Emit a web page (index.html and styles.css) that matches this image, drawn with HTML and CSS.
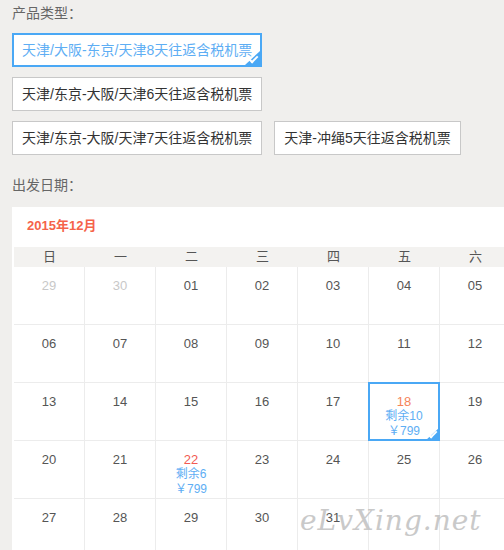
FILE: index.html
```html
<!doctype html>
<html>
    <head>
        <meta http-equiv="Content-Type" content="text/html; charset=utf-8">
        <link rel="stylesheet" href="styles.css">
    </head>
    <body>
        <div class="page">
            <div class="label">产品类型：</div>
            <div class="products">
                <span class="product active">天津/大阪-东京/天津8天往返含税机票</span>
                <span class="product">天津/东京-大阪/天津6天往返含税机票</span>
                <span class="product">天津/东京-大阪/天津7天往返含税机票</span>
                <span class="product">天津-冲绳5天往返含税机票</span>
            </div>
            <div class="label date-label">出发日期：</div>
            <div class="calendar">
                <div class="cal-title">2015年12月</div>
                <div class="week">
                    <span>日</span><span>一</span><span>二</span><span>三</span><span>四</span><span>五</span><span>六</span>
                </div>
                <div class="days">
                    <div class="day muted">29</div>
                    <div class="day muted">30</div>
                    <div class="day">01</div>
                    <div class="day">02</div>
                    <div class="day">03</div>
                    <div class="day">04</div>
                    <div class="day">05</div>

                    <div class="day">06</div>
                    <div class="day">07</div>
                    <div class="day">08</div>
                    <div class="day">09</div>
                    <div class="day">10</div>
                    <div class="day">11</div>
                    <div class="day">12</div>

                    <div class="day">13</div>
                    <div class="day">14</div>
                    <div class="day">15</div>
                    <div class="day">16</div>
                    <div class="day">17</div>
                    <div class="day selected">
                        <div class="num orange">18</div>
                        <div class="info">剩余10</div>
                        <div class="info">￥799</div>
                    </div>
                    <div class="day">19</div>

                    <div class="day">20</div>
                    <div class="day">21</div>
                    <div class="day">
                        <div class="num red">22</div>
                        <div class="info">剩余6</div>
                        <div class="info">￥799</div>
                    </div>
                    <div class="day">23</div>
                    <div class="day">24</div>
                    <div class="day">25</div>
                    <div class="day">26</div>

                    <div class="day">27</div>
                    <div class="day">28</div>
                    <div class="day">29</div>
                    <div class="day">30</div>
                    <div class="day">31</div>
                    <div class="day"></div>
                    <div class="day"></div>
                </div>
            </div>
        </div>
        <div class="watermark">eLvXing.net</div>
    </body>
</html>
```

FILE: styles.css
```css
html, body{
    overflow: hidden;
}
body{
    margin: 0;
    background: #f0efed;
    font-family: "Liberation Sans", "Noto Sans CJK SC", sans-serif;
}
.page{
    padding: 3px 0 0 12px;
}
.label{
    font-size: 14px;
    line-height: 20px;
    color: #666;
    margin-bottom: 10px;
}
.date-label{
    margin-top: 20px;
    margin-bottom: 12px;
}
.products{
    display: flex;
    flex-wrap: wrap;
    gap: 10px 12px;
}
.product{
    box-sizing: border-box;
    height: 34px;
    padding: 6px 9px;
    line-height: 20px;
    font-size: 14px;
    color: #333;
    background: #fff;
    border: 1px solid #c8c8c8;
}
.product.active,
.day.selected{
    position: relative;
}
.product.active{
    border: 2px solid #4aa8f5;
    padding: 5px 8px;
    color: #5eaef4;
}
.product.active::after,
.day.selected::after{
    content: "";
    position: absolute;
    right: 0;
    bottom: 0;
    width: 0;
    height: 0;
    border-left: 15px solid transparent;
    border-bottom: 14px solid #4aa8f5;
}
.product.active::before,
.day.selected .num::after{
    content: "";
    position: absolute;
    right: 2px;
    bottom: 4px;
    width: 7px;
    height: 3px;
    border-left: 2px solid #fff;
    border-bottom: 2px solid #fff;
    transform: rotate(-45deg);
    z-index: 1;
}
.calendar{
    width: 499px;
    padding-left: 2px;
    box-sizing: border-box;
    background: #fff;
}
.cal-title{
    height: 40px;
    line-height: 38px;
    padding-left: 13px;
    font-size: 13px;
    font-weight: bold;
    color: #f5634a;
}
.week{
    display: grid;
    grid-template-columns: repeat(7, 71px);
    height: 20px;
    line-height: 20px;
    background: #f3f2f0;
    font-size: 13px;
    color: #555;
    text-align: center;
}
.days{
    display: grid;
    grid-template-columns: repeat(7, 71px);
    grid-auto-rows: 58px;
}
.day{
    box-sizing: border-box;
    padding-top: 11px;
    border-right: 1px solid #ececec;
    border-bottom: 1px solid #ececec;
    font-size: 13px;
    line-height: 15px;
    color: #555;
    text-align: center;
}
.day.muted{
    color: #c8c8c8;
}
.day.selected::before{
    content: "";
    position: absolute;
    top: -1px;
    left: -1px;
    right: -1px;
    bottom: -1px;
    border: 2px solid #4aa8f5;
}
.day.selected::after{
    right: -1px;
    bottom: -1px;
}
.day .info{
    font-size: 12px;
    color: #5eaef4;
}
.num.orange{
    color: #f5845a;
}
.num.red{
    color: #f25a52;
}
.watermark{
    position: absolute;
    left: 300px;
    top: 504px;
    font-family: "DejaVu Serif", serif;
    font-style: italic;
    font-size: 28px;
    color: #c4c4c4;
    letter-spacing: 1px;
    opacity: 0.9;
}
```
